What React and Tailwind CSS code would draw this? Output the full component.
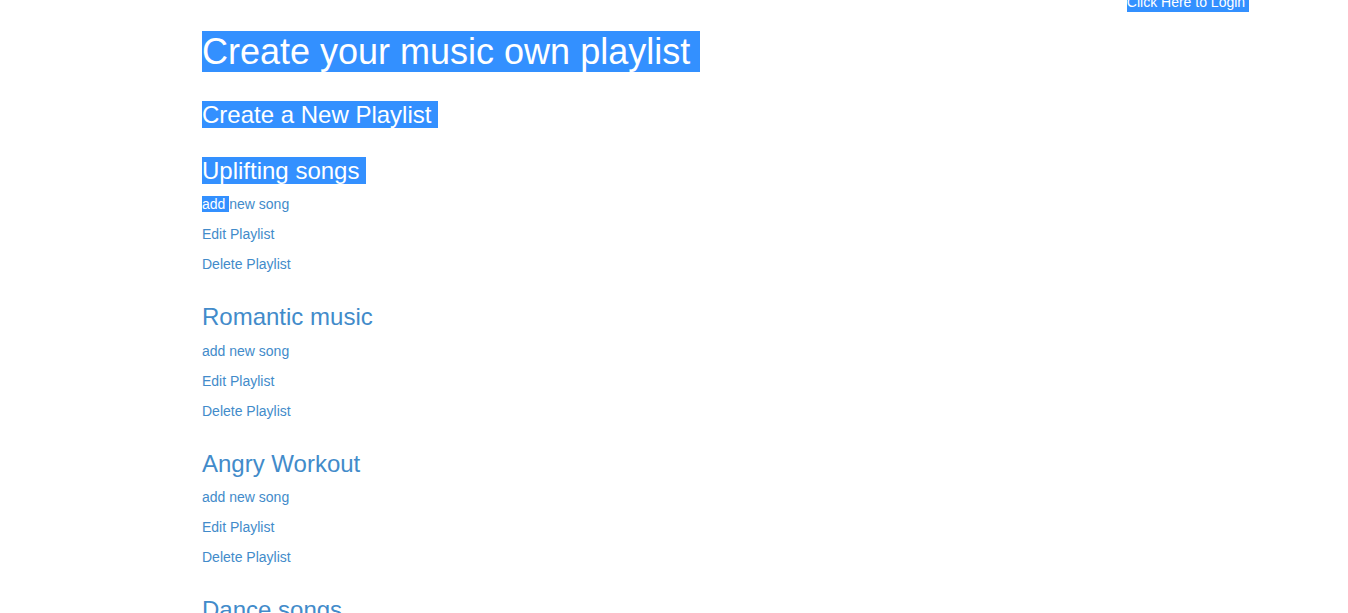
const playlists = ["Uplifting songs", "Romantic music", "Angry Workout", "Dance songs"];

function Sel({ children, className = "" }) {
  return <span className={`bg-[#3390ff] pr-[0.278em] text-white ${className}`}>{children}</span>;
}

function Playlist({ name, selected }) {
  return (
    <div className="flex flex-col">
      <h3 className="mt-5 mb-2.5 text-[24px] leading-[1.1] font-normal">
        {selected ? <Sel>{name}</Sel> : <span className="text-[#428bca]">{name}</span>}
      </h3>
      <p className="mb-2.5 text-[14px] leading-5 text-[#428bca]">
        {selected ? <Sel>add</Sel> : "add "}new song
      </p>
      <p className="mb-2.5 text-[14px] leading-5 text-[#428bca]">Edit Playlist</p>
      <p className="mb-2.5 text-[14px] leading-5 text-[#428bca]">Delete Playlist</p>
    </div>
  );
}

export default function App() {
  return (
    <div className="h-[613px] overflow-hidden bg-white font-['Liberation_Sans',Arial,sans-serif] text-[#333]">
      <div className="-mt-2 flex h-5 justify-end pr-[99px] text-[14px] leading-5">
        <Sel>Click Here to Login</Sel>
      </div>
      <div className="flex flex-col pl-[202px]">
        <h1 className="mt-5 mb-2.5 text-[36px] leading-[1.1] font-normal">
          <Sel>Create your music own playlist</Sel>
        </h1>
        <h3 className="mt-5 mb-2.5 text-[24px] leading-[1.1] font-normal">
          <Sel>Create a New Playlist</Sel>
        </h3>
        {playlists.map((p, i) => (
          <Playlist key={p} name={p} selected={i === 0} />
        ))}
      </div>
    </div>
  );
}
